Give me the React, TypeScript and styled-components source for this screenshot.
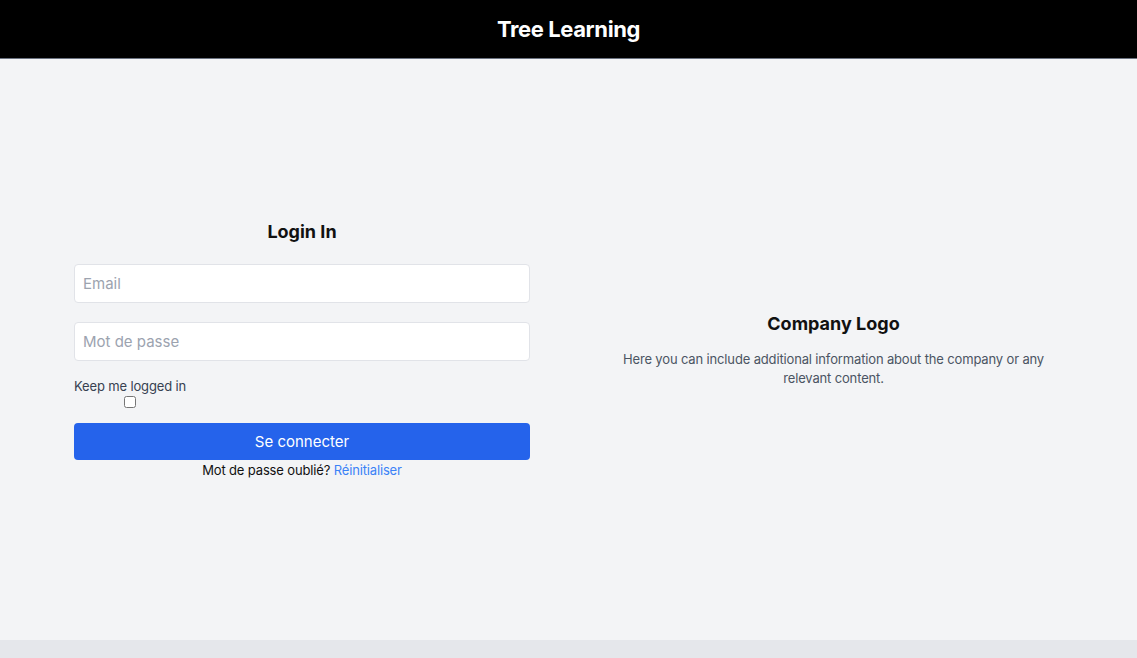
import styled, { createGlobalStyle } from 'styled-components';

const GlobalStyle = createGlobalStyle`
  html, body, #root {
    margin: 0;
    height: 100%;
  }
  body {
    font-family: Inter, "Liberation Sans", Arial, sans-serif;
    background: #f3f4f6;
  }
  * {
    box-sizing: border-box;
  }
`;

const Page = styled.div`
  display: flex;
  flex-direction: column;
  height: 100vh;
`;

const Header = styled.header`
  height: 59px;
  flex-shrink: 0;
  background: #000;
  border-bottom: 1px solid #6b7280;
  display: flex;
  align-items: center;
  justify-content: center;
  color: #fff;
  font-size: 22px;
  font-weight: 700;
  letter-spacing: -0.4px;
`;

const Main = styled.main`
  flex: 1;
  display: flex;
  align-items: center;
  padding-left: 74px;
`;

const FormColumn = styled.form`
  width: 456px;
  display: flex;
  flex-direction: column;
`;

const Title = styled.h2`
  margin: 0 0 20px;
  font-size: 18px;
  font-weight: 700;
  color: #111;
  text-align: center;
  line-height: 24px;
`;

const Input = styled.input<{ $last?: boolean }>`
  height: 39px;
  width: 100%;
  padding: 0 8px;
  border: 1px solid #e1e3e8;
  border-radius: 4px;
  background: #fff;
  font-family: inherit;
  font-size: 15px;
  color: #111;
  margin-bottom: ${(p) => (p.$last ? '17px' : '19px')};

  &::placeholder {
    color: #9ca3af;
  }
`;

const KeepLabel = styled.label`
  align-self: flex-start;
  display: flex;
  flex-direction: column;
  align-items: center;
  font-size: 13px;
  letter-spacing: -0.15px;
  color: #374151;
  line-height: 16px;
`;

const Check = styled.input`
  margin: 2px 0 0;
  width: 12px;
  height: 12px;
`;

const SubmitButton = styled.button`
  margin-top: 15px;
  height: 37px;
  border: none;
  border-radius: 4px;
  background: #2563eb;
  color: #fff;
  font-family: inherit;
  font-size: 15px;
`;

const Forgot = styled.p`
  margin: 1px 0 0;
  text-align: center;
  font-size: 13px;
  letter-spacing: -0.15px;
  color: #111;
  line-height: 18px;
`;

const Link = styled.a`
  color: #3b82f6;
  text-decoration: none;
`;

const InfoColumn = styled.section`
  flex: 1;
  display: flex;
  flex-direction: column;
  align-items: center;
  text-align: center;
`;

const InfoTitle = styled.h2`
  margin: 0 0 14px;
  font-size: 18px;
  font-weight: 700;
  color: #111;
  line-height: 24px;
`;

const InfoText = styled.p`
  margin: 0;
  max-width: 440px;
  font-size: 13px;
  letter-spacing: -0.15px;
  line-height: 19px;
  color: #4b5563;
`;

const Footer = styled.footer`
  height: 18px;
  flex-shrink: 0;
  background: #e5e7eb;
`;

export default function App() {
  return (
    <>
      <GlobalStyle />
      <Page>
        <Header>Tree Learning</Header>
        <Main>
          <FormColumn onSubmit={(e) => e.preventDefault()}>
            <Title>Login In</Title>
            <Input type="email" placeholder="Email" />
            <Input type="password" placeholder="Mot de passe" $last />
            <KeepLabel>
              Keep me logged in
              <Check type="checkbox" />
            </KeepLabel>
            <SubmitButton type="submit">Se connecter</SubmitButton>
            <Forgot>
              Mot de passe oublié? <Link href="#">Réinitialiser</Link>
            </Forgot>
          </FormColumn>
          <InfoColumn>
            <InfoTitle>Company Logo</InfoTitle>
            <InfoText>
              Here you can include additional information about the company or any relevant content.
            </InfoText>
          </InfoColumn>
        </Main>
        <Footer />
      </Page>
    </>
  );
}
